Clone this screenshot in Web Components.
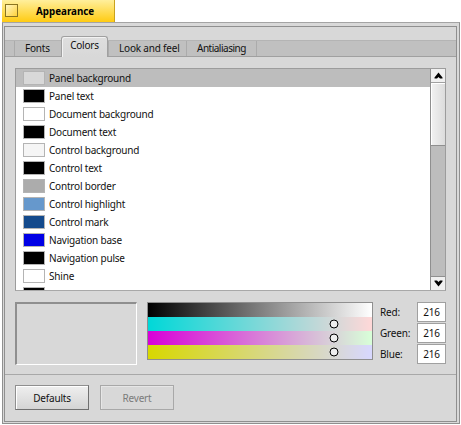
<!DOCTYPE html>
<html>
<head>
<meta charset="utf-8">
<title>Appearance</title>
<style>
html, body { margin: 0; padding: 0; background: #fff; }
body { font: 10px "Noto Sans", sans-serif; letter-spacing: -0.2px; color: #000; }
</style>
</head>
<body>
<appearance-window>
    <tab-strip>
        <tab-item style="width: 47px">Fonts</tab-item>
        <tab-item active>Colors</tab-item>
        <tab-item style="width: 78px">Look and feel</tab-item>
        <tab-item style="width: 71px; letter-spacing: -0.5px; border-right: 1px solid #ababab">Antialiasing</tab-item>
    </tab-strip>
    <color-list>
        <color-row selected color="#d8d8d8">Panel background</color-row>
        <color-row color="#000000">Panel text</color-row>
        <color-row color="#ffffff">Document background</color-row>
        <color-row color="#000000">Document text</color-row>
        <color-row color="#f5f5f5">Control background</color-row>
        <color-row color="#000000">Control text</color-row>
        <color-row color="#acacac">Control border</color-row>
        <color-row color="#6698cc">Control highlight</color-row>
        <color-row color="#144a8c">Control mark</color-row>
        <color-row color="#0000e5">Navigation base</color-row>
        <color-row color="#000000">Navigation pulse</color-row>
        <color-row color="#ffffff">Shine</color-row>
        <color-row color="#000000"></color-row>
    </color-list>
    <color-editor>
        <value-field slot="fields" label="Red:" value="216"></value-field>
        <value-field slot="fields" label="Green:" value="216"></value-field>
        <value-field slot="fields" label="Blue:" value="216"></value-field>
    </color-editor>
    <bar-button slot="buttons" default>Defaults</bar-button>
    <bar-button slot="buttons" disabled>Revert</bar-button>
</appearance-window>

<script>
class AppearanceWindow extends HTMLElement {
    constructor() {
        super();
        this.attachShadow({ mode: 'open' });
        this.shadowRoot.innerHTML = `
            <style>
                :host { display: block; width: 461px; height: 425px; box-sizing: border-box; padding-left: 2px; }
                .tab {
                    display: flex; align-items: flex-start; box-sizing: border-box;
                    width: 113px; height: 22px; padding: 4px 0 0 3px;
                    background: linear-gradient(#ffef9c, #ffcb12);
                    border-right: 1px solid #c9a21e;
                }
                .box {
                    width: 13px; height: 13px; box-sizing: border-box;
                    border: 1px solid #8a7420;
                    background: linear-gradient(135deg, #fff6c4, #ffd23a);
                }
                .title { margin-left: 18px; font-weight: bold; font-size: 9.8px; letter-spacing: 0; line-height: 15px; }
                .frame {
                    box-sizing: border-box; height: 402px; width: 458px;
                    background: #d8d8d8;
                    border: 1px solid #8f8f8f; border-top-color: #a4a4a4; padding: 3px 2px 1px 1px;
                }
                .inner {
                    box-sizing: border-box; height: 100%;
                    border: 1px solid #8f8f8f; padding-top: 13px;
                    display: flex; flex-direction: column;
                }
                .page { padding: 11px 10px 0 10px; height: 318px; box-sizing: border-box; border-bottom: 1px solid #a8a8a8; }
                .buttons { display: flex; gap: 11px; padding: 10px 10px 0 10px; }
            </style>
            <div class="tab"><span class="box"></span><span class="title">Appearance</span></div>
            <div class="frame">
                <div class="inner">
                    <slot name="tabs"></slot>
                    <div class="page">
                        <slot name="list"></slot>
                        <slot name="editor"></slot>
                    </div>
                    <div class="buttons"><slot name="buttons"></slot></div>
                </div>
            </div>
        `;
    }
    connectedCallback() {
        // children sit in named slots by tag, so the markup above stays short
        for (const el of this.children) {
            const tag = el.tagName.toLowerCase();
            if (tag === 'tab-strip') el.slot = 'tabs';
            if (tag === 'color-list') el.slot = 'list';
            if (tag === 'color-editor') el.slot = 'editor';
        }
    }
}

class TabStrip extends HTMLElement {
    constructor() {
        super();
        this.attachShadow({ mode: 'open' });
        this.shadowRoot.innerHTML = `
            <style>
                :host {
                    display: flex; align-items: flex-end; box-sizing: border-box; height: 17px;
                    background: #c0c0c0; border-bottom: 1px solid #a0a0a0; border-top: 1px solid #b4b4b4;
                    padding-left: 9px;
                }
            </style>
            <slot></slot>
        `;
    }
}

class TabItem extends HTMLElement {
    constructor() {
        super();
        this.attachShadow({ mode: 'open' });
        this.shadowRoot.innerHTML = `
            <style>
                :host {
                    display: block; box-sizing: border-box; height: 15px; padding: 0 0 0 10px;
                    line-height: 15px; color: #111; white-space: nowrap;
                    border-left: 1px solid #ababab;
                }
                :host([active]) {
                    height: 21px; margin-bottom: -1px; width: 47px; text-align: center; padding: 0; line-height: 17px;
                    background: linear-gradient(#dedede, #d8d8d8);
                    border: 1px solid #a0a0a0; border-bottom: 0; border-radius: 3px 3px 0 0;
                    box-shadow: inset 1px 1px 0 #f2f2f2;
                }
            </style>
            <slot></slot>
        `;
    }
}

class ColorList extends HTMLElement {
    constructor() {
        super();
        this.attachShadow({ mode: 'open' });
        this.shadowRoot.innerHTML = `
            <style>
                :host {
                    display: flex; box-sizing: border-box; height: 223px; width: 431px;
                    border: 1px solid #9c9c9c; border-bottom-color: #a8a8a8; background: #fff;
                }
                .rows { flex: 1; overflow: hidden; }
                .bar { width: 14px; display: flex; flex-direction: column; border-left: 1px solid #8f8f8f; background: #bdbdbd; }
                .arrow {
                    height: 14px; box-sizing: border-box; background: #f0f0f0;
                    border-bottom: 1px solid #a0a0a0; display: flex; align-items: center; justify-content: center;
                }
                .arrow.down { border-bottom: 0; border-top: 1px solid #8f8f8f; }
                .thumb {
                    height: 63px; box-sizing: border-box; background: linear-gradient(90deg, #f2f2f2, #dcdcdc);
                    border-bottom: 1px solid #8f8f8f; box-shadow: inset 1px 1px 0 #fff;
                }
                .track { flex: 1; }
            </style>
            <div class="rows"><slot></slot></div>
            <div class="bar">
                <div class="arrow"><svg width="9" height="7" viewBox="0 0 9 7"><path d="M4.5 0.5L8.5 5.5V6.5H6L4.5 5L3 6.5H0.5V5.5Z" fill="#000"/></svg></div>
                <div class="thumb"></div>
                <div class="track"></div>
                <div class="arrow down"><svg width="9" height="7" viewBox="0 0 9 7"><path d="M4.5 6.5L8.5 1.5V0.5H6L4.5 2L3 0.5H0.5V1.5Z" fill="#000"/></svg></div>
            </div>
        `;
    }
}

class ColorRow extends HTMLElement {
    constructor() {
        super();
        this.attachShadow({ mode: 'open' });
        const color = this.getAttribute('color') || '#000';
        this.shadowRoot.innerHTML = `
            <style>
                :host { display: flex; align-items: center; height: 18px; padding-left: 7px; color: #111; white-space: nowrap; }
                :host([selected]) { background: #bdbdbd; }
                .swatch {
                    flex: none; width: 22px; height: 14px; box-sizing: border-box; margin-right: 4px;
                    border: 1px solid #b4b4b4; background: ${color};
                }
            </style>
            <span class="swatch"></span><slot></slot>
        `;
    }
}

class ColorEditor extends HTMLElement {
    constructor() {
        super();
        this.attachShadow({ mode: 'open' });
        this.shadowRoot.innerHTML = `
            <style>
                :host { display: flex; margin-top: 11px; align-items: flex-start; }
                .preview {
                    width: 122px; height: 63px; box-sizing: border-box; margin-right: 10px;
                    border: 2px solid #8f8f8f; border-right: 1px solid #fff; border-bottom: 1px solid #fff;
                    background: #d8d8d8;
                }
                .ramps {
                    position: relative; width: 226px; height: 58px; box-sizing: border-box; margin-right: 7px;
                    border: 1px solid #8f8f8f;
                    display: flex; flex-direction: column;
                }
                .ramps div { flex: 1; }
                .k { background: linear-gradient(90deg, #000, #fff); }
                .r { background: linear-gradient(90deg, rgb(0,216,216), rgb(255,216,216)); }
                .g { background: linear-gradient(90deg, rgb(216,0,216), rgb(216,255,216)); }
                .b { background: linear-gradient(90deg, rgb(216,216,0), rgb(216,216,255)); }
                svg { position: absolute; left: 181px; width: 10px; height: 10px; }
                .fields { display: flex; flex-direction: column; gap: 1px; }
            </style>
            <div class="preview"></div>
            <div class="ramps">
                <div class="k"></div><div class="r"></div><div class="g"></div><div class="b"></div>
                <svg style="top:16px" viewBox="0 0 10 10"><circle cx="5" cy="5" r="4" fill="#eee" stroke="#000"/></svg>
                <svg style="top:30px" viewBox="0 0 10 10"><circle cx="5" cy="5" r="4" fill="#eee" stroke="#000"/></svg>
                <svg style="top:44px" viewBox="0 0 10 10"><circle cx="5" cy="5" r="4" fill="#eee" stroke="#000"/></svg>
            </div>
            <div class="fields"><slot name="fields"></slot></div>
        `;
    }
}

class ValueField extends HTMLElement {
    constructor() {
        super();
        this.attachShadow({ mode: 'open' });
        this.shadowRoot.innerHTML = `
            <style>
                :host { display: flex; align-items: center; height: 20px; width: 66px; color: #111; }
                .label { width: 37px; }
                .value {
                    width: 29px; height: 20px; box-sizing: border-box; background: #fff; text-align: center;
                    border: 1px solid #a0a0a0; line-height: 18px;
                }
            </style>
            <span class="label">${this.getAttribute('label')}</span>
            <span class="value">${this.getAttribute('value')}</span>
        `;
    }
}

class BarButton extends HTMLElement {
    constructor() {
        super();
        this.attachShadow({ mode: 'open' });
        this.shadowRoot.innerHTML = `
            <style>
                :host {
                    display: flex; align-items: center; justify-content: center; box-sizing: border-box;
                    width: 74px; height: 25px; color: #111; border: 1px solid #a8a8a8;
                    background: linear-gradient(#efefef, #d4d4d4);
                }
                :host([default]) { border: 1px solid #8f8f8f; border-right-color: #707070; border-bottom-color: #707070; box-shadow: inset 1px 1px 0 #fff; }
                :host([disabled]) { color: #7b7b7b; background: #d8d8d8; box-shadow: inset 1px 1px 0 #e6e6e6; }
            </style>
            <slot></slot>
        `;
    }
}

customElements.define('appearance-window', AppearanceWindow);
customElements.define('tab-strip', TabStrip);
customElements.define('tab-item', TabItem);
customElements.define('color-list', ColorList);
customElements.define('color-row', ColorRow);
customElements.define('color-editor', ColorEditor);
customElements.define('value-field', ValueField);
customElements.define('bar-button', BarButton);
</script>
</body>
</html>
